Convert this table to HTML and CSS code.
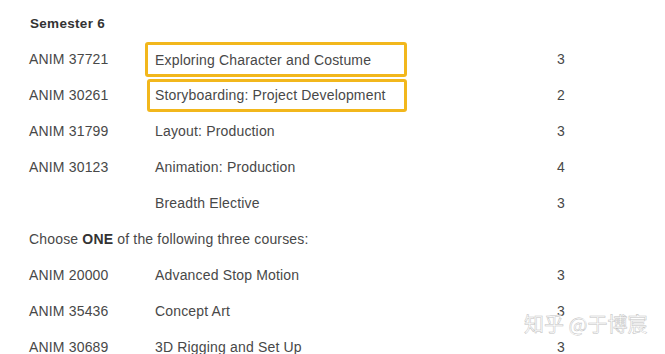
FILE: index.html
```html
<!DOCTYPE html>
<html>
<head>
<meta charset="utf-8">
<link rel="stylesheet" href="styles.css">
</head>
<body>
<div class="page">
  <div class="row head"><span class="sem">Semester 6</span></div>
  <div class="row"><span class="code">ANIM 37721</span><span class="title"><span class="hl hl1">Exploring Character and Costume</span></span><span class="cr">3</span></div>
  <div class="row"><span class="code">ANIM 30261</span><span class="title"><span class="hl hl2">Storyboarding: Project Development</span></span><span class="cr">2</span></div>
  <div class="row"><span class="code">ANIM 31799</span><span class="title">Layout: Production</span><span class="cr">3</span></div>
  <div class="row"><span class="code">ANIM 30123</span><span class="title">Animation: Production</span><span class="cr">4</span></div>
  <div class="row"><span class="code"></span><span class="title">Breadth Elective</span><span class="cr">3</span></div>
  <div class="row choose">Choose&nbsp;<b>ONE</b>&nbsp;of the following three courses:</div>
  <div class="row"><span class="code">ANIM 20000</span><span class="title">Advanced Stop Motion</span><span class="cr">3</span></div>
  <div class="row"><span class="code">ANIM 35436</span><span class="title">Concept Art</span><span class="cr">3</span></div>
  <div class="row"><span class="code">ANIM 30689</span><span class="title">3D Rigging and Set Up</span><span class="cr">3</span></div>
</div>
<div class="wm">知乎 @于博宸</div>
</body>
</html>
```
FILE: styles.css
```css
html, body {
  margin: 0;
  padding: 0;
  background: #fff;
  overflow: hidden;
}
body {
  font-family: "Liberation Sans", Arial, "Noto Sans CJK SC", sans-serif;
  color: #484848;
  font-size: 14px;
  letter-spacing: 0.17px;
}
.page {
  padding-top: 5px;
  padding-left: 29px;
}
.row {
  height: 36px;
  display: flex;
  align-items: center;
}
.sem {
  font-weight: bold;
  font-size: 13.5px;
  color: #333;
  padding-left: 1px;
  letter-spacing: 0.3px;
}
.code {
  width: 126px;
  flex: none;
}
.title {
  width: 402px;
  flex: none;
  display: flex;
  align-items: center;
}
.cr {
  flex: none;
}
.hl {
  display: flex;
  align-items: center;
  box-sizing: border-box;
  border: 3px solid #f2b71c;
  border-radius: 3px;
  flex: none;
}
.hl1 {
  margin-left: -10px;
  width: 262px;
  height: 35px;
  padding-left: 7px;
  margin-top: 1px;
}
.hl2 {
  margin-left: -8px;
  width: 260px;
  height: 33px;
  padding-left: 5px;
}
.choose b {
  color: #333;
}
.wm {
  position: absolute;
  left: 524px;
  top: 309px;
  font-size: 20px;
  font-family: "Noto Sans CJK SC", sans-serif;
  color: rgba(255, 255, 255, 0.75);
  -webkit-text-stroke: 0.5px #c2c2c2;
  letter-spacing: 0px;
  white-space: nowrap;
}
```
